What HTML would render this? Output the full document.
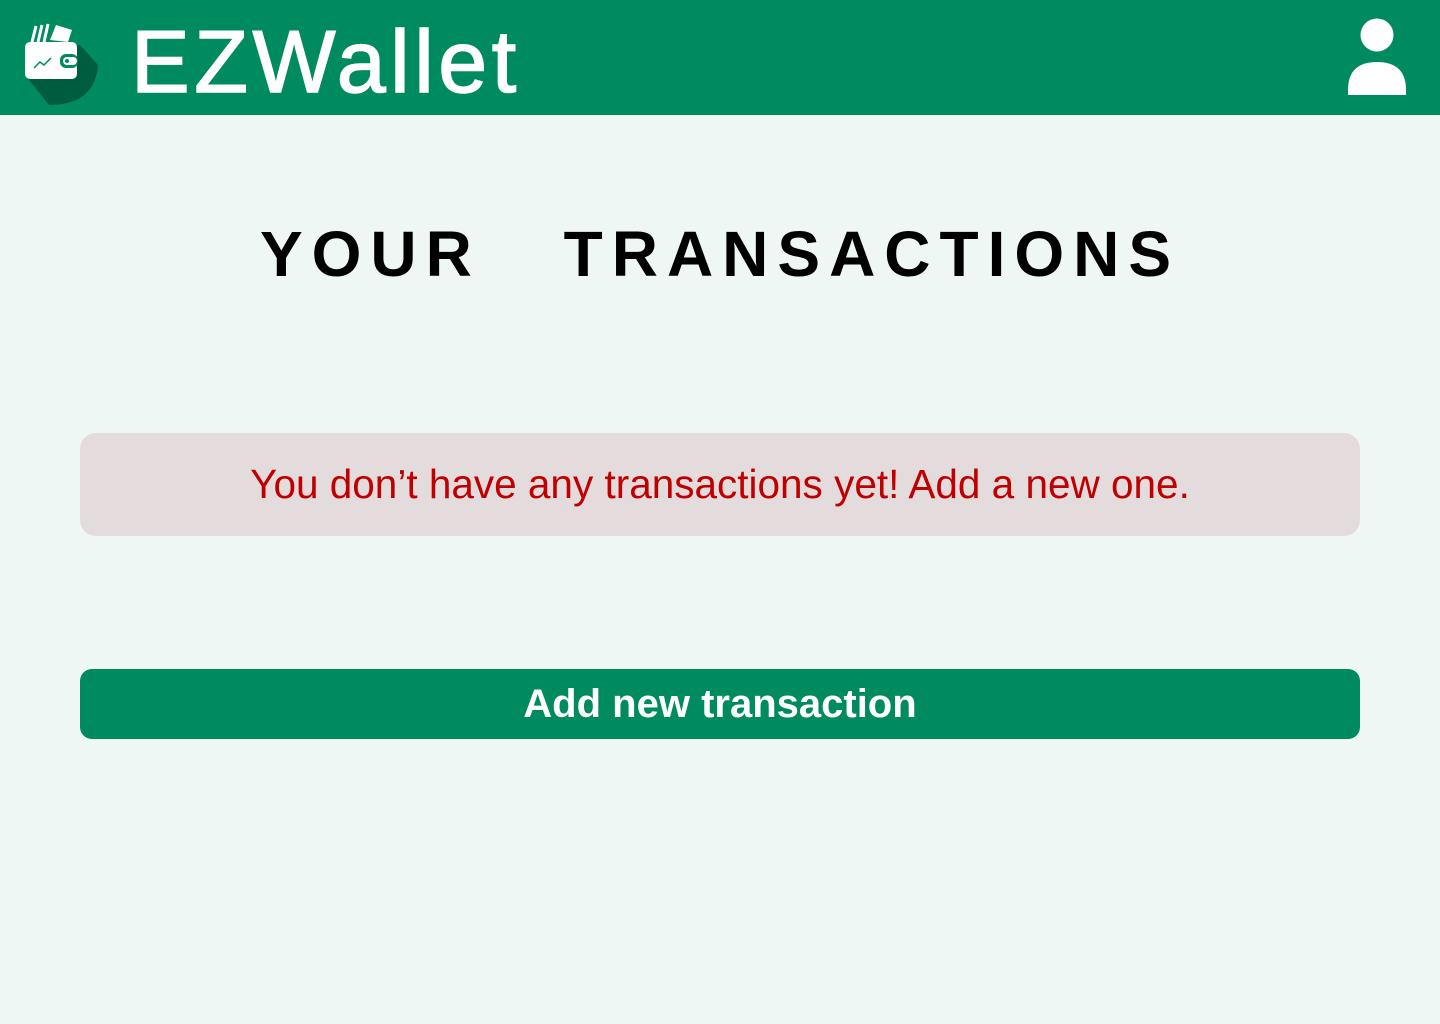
<!DOCTYPE html>
<html><head><meta charset="utf-8"><style>
*{margin:0;padding:0;box-sizing:border-box}
body{width:1440px;height:1024px;background:#eef7f4;font-family:"Liberation Sans",sans-serif;position:relative;overflow:hidden}
.hdr{position:absolute;left:0;top:0;width:1440px;height:115px;background:#008a60}
.brand{position:absolute;left:131px;top:12px;font-size:88px;color:#fff;letter-spacing:4.5px;line-height:100px;-webkit-text-stroke:1.5px #fff}
h1{position:absolute;left:0;width:1440px;top:214px;text-align:center;font-size:64px;font-weight:bold;letter-spacing:9px;word-spacing:56px;line-height:80px;color:#000}
.alert{position:absolute;left:80px;top:433px;width:1280px;height:103px;background:#e4dcdc;border-radius:16px;color:#c00000;font-size:40.5px;text-align:center;line-height:103px}
.btn{position:absolute;left:80px;top:669px;width:1280px;height:70px;background:#008a60;border-radius:12px;color:#fff;font-size:40px;font-weight:bold;text-align:center;line-height:70px}
</style></head><body>
<div class="hdr">
<svg style="position:absolute;left:20px;top:20px" width="82" height="88" viewBox="0 0 82 88">
<path d="M5 55 L29 85 Q75 85 78 45 L60 25 L40 25 Z" fill="#005c3f"/>
<rect x="5" y="22" width="52" height="37" rx="5" fill="#fff"/>
<path d="M12 22 L16 6 M18 22 L22 5 M24 22 L28 4" stroke="#fff" stroke-width="3"/>
<path d="M30 20 L36 5 L52 10 L48 22 Z" fill="#fff"/>
<rect x="40" y="34" width="18" height="14" rx="6" fill="#008a60"/>
<rect x="43" y="37" width="14" height="8" rx="4" fill="#fff"/>
<circle cx="47" cy="41" r="2" fill="#008a60"/>
<path d="M14 48 L20 42 L24 45 L31 38" stroke="#008a60" stroke-width="1.5" fill="none"/>
</svg>
<div class="brand">EZWallet</div>
<svg style="position:absolute;left:1346px;top:18px" width="62" height="78" viewBox="0 0 62 78">
<circle cx="31" cy="17" r="16.5" fill="#fff"/>
<path d="M2 77 L2 72 Q2 44 31 44 Q60 44 60 72 L60 77 Z" fill="#fff"/>
</svg>
</div>
<h1>YOUR TRANSACTIONS</h1>
<div class="alert">You don’t have any transactions yet! Add a new one.</div>
<div class="btn">Add new transaction</div>
</body></html>
